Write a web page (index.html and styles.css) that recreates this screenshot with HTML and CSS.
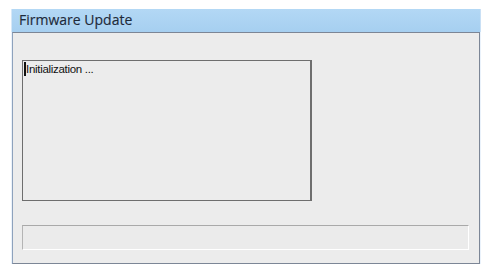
FILE: index.html
```html
<!DOCTYPE html>
<html>
<head>
<meta charset="utf-8">
<link rel="stylesheet" href="styles.css">
</head>
<body>
<div class="window">
  <div class="titlebar">Firmware Update</div>
  <div class="client">
    <div class="log"><span class="caret"></span>Initialization ...</div>
    <div class="spacer"></div>
    <div class="progress"></div>
  </div>
</div>
</body>
</html>
```
FILE: styles.css
```css
html, body {
  margin: 0;
  padding: 0;
  background: #ffffff;
}
body {
  padding: 9px 0 0 11px;
}
.window {
  width: 470px;
  height: 255px;
  display: flex;
  flex-direction: column;
  background: #eaf2fb;
  box-sizing: border-box;
}
.titlebar {
  height: 23px;
  box-sizing: border-box;
  background: linear-gradient(#b3d8f5, #a6cff0);
  border-left: 1px solid #d6e8f8;
  border-right: 1px solid #c9e0f5;
  font-family: "Segoe UI", "Open Sans", "DejaVu Sans", sans-serif;
  font-size: 14px;
  color: #1e2a3a;
  padding: 2px 0 0 7px;
  line-height: 18px;
  -webkit-text-stroke: 0.15px #1e2a3a;
}
.client {
  flex: 1;
  margin: 0 1px 0 1px;
  background: #ececec;
  border: 1px solid #7c8696;
  border-left-color: #8ea2bc;
  display: flex;
  flex-direction: column;
  padding: 27px 10px 13px 9px;
  box-sizing: border-box;
}
.log {
  width: 290px;
  height: 141px;
  box-sizing: border-box;
  border: 1px solid #6e6e6e;
  border-right-width: 2px;
  background: #ececec;
  font-family: "Liberation Sans Narrow", "Liberation Sans", Arial, sans-serif;
  font-size: 11.5px;
  color: #111;
  padding: 1px 0 0 1px;
  line-height: 14px;
  letter-spacing: -0.3px;
}
.caret {
  display: inline-block;
  width: 2px;
  height: 14px;
  background: #111;
  vertical-align: -3px;
  margin-right: 0;
}
.spacer {
  flex: 1;
}
.progress {
  width: 447px;
  height: 25px;
  box-sizing: border-box;
  border: 1px solid #ffffff;
  border-top-color: #a9a9a9;
  border-left-color: #b4b4b4;
  background: #ebebeb;
}
```
